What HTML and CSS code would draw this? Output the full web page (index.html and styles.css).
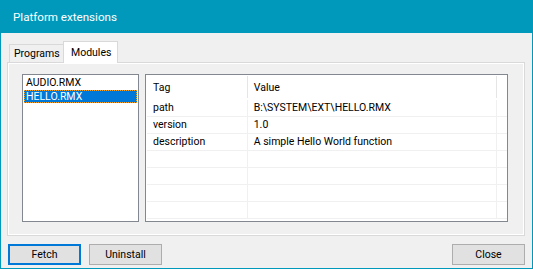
FILE: index.html
```html
<!DOCTYPE html>
<html>
<head>
<meta charset="utf-8">
<link rel="stylesheet" href="styles.css">
</head>
<body>
<div class="window">
  <div class="titlebar">Platform extensions</div>
  <div class="client">
    <div class="tabs">
      <div class="tabbar">
        <div class="tab">Programs</div>
        <div class="tab active">Modules</div>
      </div>
      <div class="panel">
        <div class="listbox">
          <div class="item">AUDIO.RMX</div>
          <div class="item selected">HELLO.RMX</div>
        </div>
        <div class="grid">
          <div class="head">
            <div class="hc c1">Tag</div>
            <div class="hc c2">Value</div>
            <div class="hc c3"></div>
          </div>
          <div class="row"><div class="c c1">path</div><div class="c c2">B:\SYSTEM\EXT\HELLO.RMX</div><div class="c c3"></div></div>
          <div class="row"><div class="c c1">version</div><div class="c c2">1.0</div><div class="c c3"></div></div>
          <div class="row"><div class="c c1">description</div><div class="c c2">A simple Hello World function</div><div class="c c3"></div></div>
          <div class="row"><div class="c c1"></div><div class="c c2"></div><div class="c c3"></div></div>
          <div class="row"><div class="c c1"></div><div class="c c2"></div><div class="c c3"></div></div>
          <div class="row"><div class="c c1"></div><div class="c c2"></div><div class="c c3"></div></div>
          <div class="row"><div class="c c1"></div><div class="c c2"></div><div class="c c3"></div></div>
        </div>
      </div>
    </div>
    <div class="buttons">
      <button class="btn default">Fetch</button>
      <button class="btn">Uninstall</button>
      <div class="spacer"></div>
      <button class="btn">Close</button>
    </div>
  </div>
</div>
</body>
</html>
```
FILE: styles.css
```css
html, body {
  margin: 0;
  padding: 0;
  background: #f0f0f0;
}
body {
  font-family: Roboto, "Noto Sans", sans-serif;
  font-size: 10.5px;
  color: #000;
}
.window {
  width: 533px;
  height: 269px;
  box-sizing: border-box;
  border: 1px solid #0099bc;
  border-top: none;
  background: #f0f0f0;
  display: flex;
  flex-direction: column;
}
.titlebar {
  height: 33px;
  margin: 0 -1px;
  background: #0099bc;
  color: #fff;
  font-size: 11.6px;
  line-height: 34px;
  padding-left: 13px;
}
.client {
  flex: 1;
  display: flex;
  flex-direction: column;
  padding: 8px 7px 0 6px;
}
.tabbar {
  display: flex;
  align-items: flex-end;
  height: 21px;
  padding-left: 2px;
}
.tab {
  height: 18px;
  box-sizing: border-box;
  border: 1px solid #d9d9d9;
  border-bottom: none;
  background: #f0f0f0;
  padding: 0 5px 0 4px;
  line-height: 18px;
  width: 55px;
}
.tab.active {
  height: 22px;
  margin-bottom: -1px;
  background: #fff;
  border-color: #d9d9d9;
  padding-left: 7px;
  line-height: 21px;
  position: relative;
  z-index: 1;
  margin-left: -1px;
}
.panel {
  height: 174px;
  box-sizing: border-box;
  border: 1px solid #d9d9d9;
  box-shadow: inset 1px 1px 0 #fff, inset -1px -1px 0 #fff;
  background: #f0f0f0;
  display: flex;
  gap: 6px;
  padding: 11px 16px 0 14px;
}
.listbox {
  width: 118px;
  height: 148px;
  box-sizing: border-box;
  border: 1px solid #828790;
  background: #fff;
  padding: 1px;
}
.item {
  height: 14px;
  line-height: 14px;
  padding-left: 2px;
}
.item.selected {
  background: #0078d7;
  color: #fff;
  outline: 1px dotted #f5a623;
  outline-offset: -1px;
  height: 13px;
  line-height: 13px;
}
.grid {
  width: 363px;
  height: 148px;
  box-sizing: border-box;
  border: 1px solid #828790;
  background: #fff;
  padding: 0 0 0 1px;
}
.head, .row {
  display: flex;
}
.head {
  height: 25px;
  line-height: 25px;
}
.hc {
  box-sizing: border-box;
  padding-left: 6px;
  position: relative;
}
.hc::after {
  content: "";
  position: absolute;
  right: 0;
  top: 1px;
  bottom: 2px;
  width: 1px;
  background: #e5e5e5;
}
.row {
  height: 17px;
  line-height: 16px;
}
.c {
  box-sizing: border-box;
  border-bottom: 1px solid #f0f0f0;
  border-right: 1px solid #f0f0f0;
  padding-left: 6px;
  white-space: nowrap;
}
.c1 { width: 101px; }
.c2 { width: 250px; }
.c3 { width: 10px; border-right: none; }
.hc.c3::after { display: none; }
.buttons {
  display: flex;
  gap: 8px;
  padding: 8px 0 0 1px;
}
.spacer { flex: 1; }
.btn {
  width: 73px;
  height: 21px;
  box-sizing: border-box;
  border: 1px solid #adadad;
  background: #e1e1e1;
  font-family: inherit;
  font-size: 10.5px;
  color: #000;
  padding: 0;
  margin: 0;
}
.btn.default {
  border: 2px solid #0078d7;
}
```
